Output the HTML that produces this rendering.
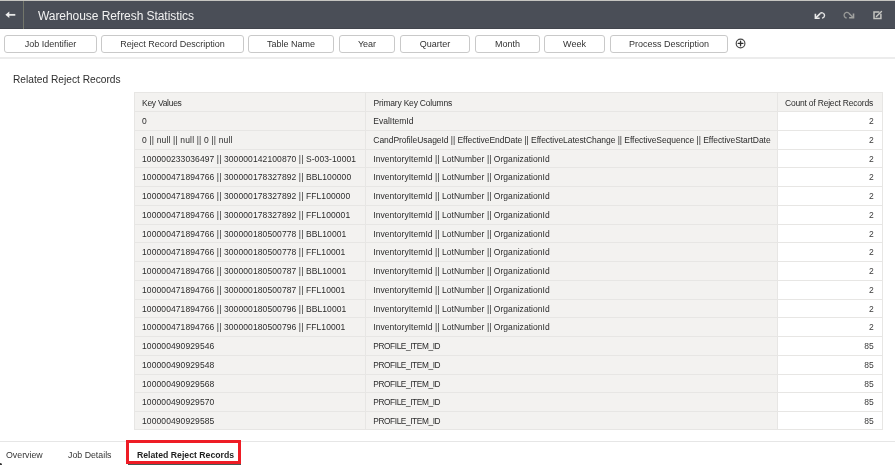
<!DOCTYPE html>
<html><head><meta charset="utf-8">
<style>
*{box-sizing:border-box;margin:0;padding:0}
html,body{width:895px;height:465px;overflow:hidden;background:#fff;font-family:"Liberation Sans",sans-serif;color:#333}
.hdr{position:absolute;left:0;top:0;width:895px;height:29px;background:#4a4e57;border-top:1px solid #c6c5c1}
.sep{position:absolute;left:23px;top:1px;width:1px;height:28px;background:#73766b}
.hbot{position:absolute;left:0;top:28px;width:895px;height:1px;background:#42454d}
.back{position:absolute;left:5px;top:9px;width:11px;height:11px}
.title{position:absolute;left:38.2px;top:8px;font-size:12px;letter-spacing:-0.06px;color:#f2f2f2;white-space:nowrap;line-height:16px}
.ico{position:absolute}
.btn{position:absolute;top:35px;height:18px;border:1px solid #c9c9c9;border-radius:3px;background:#fff;font-size:9px;color:#333;text-align:center;line-height:16px;white-space:nowrap}
.tbsep{position:absolute;left:0;top:57px;width:895px;height:2px;background:#ececec}
.h1{position:absolute;left:13px;top:73.2px;font-size:10.2px;color:#2e2e2e;line-height:14px;white-space:nowrap}
.tbl{position:absolute;left:134px;top:92px;width:749px;height:338px;border:1px solid #e7e6e4;background:#f3f2f0}
.tblb{position:absolute;left:134px;top:92px;width:749px;height:338px;border:1px solid #e7e6e4}
.th{position:absolute;left:0;top:0;width:747px;height:19px}
.th div{position:absolute;top:0;height:19px;line-height:20.5px;font-size:8.5px;letter-spacing:-0.2px;color:#333;white-space:nowrap}
.r{position:absolute;left:0;width:747px;height:18.76px;border-top:1px solid #e7e6e4}
.r div{position:absolute;top:0;height:17.76px;line-height:18px;font-size:8.5px;color:#333;white-space:nowrap}
.c1{left:0;width:230px;padding-left:7px}
.c2{left:230px;width:413px;padding-left:7.3px;border-left:1px solid #e7e6e4}
.c3{left:642px;width:105px;padding-right:8.2px;text-align:right;background:#fff;color:#3a3a3a!important;border-left:1px solid #e7e6e4}
.tabsep{position:absolute;left:0;top:441px;width:895px;height:1px;background:#e6e6e6}
.tab{position:absolute;top:448px;font-size:8.8px;color:#363636;line-height:14px;white-space:nowrap}
.redbox{position:absolute;left:126px;top:440px;width:115px;height:24px;border:3px solid #ee1c25}
.ul{position:absolute;left:128px;top:464px;width:113px;height:1px;background:#4b5753}
.k{letter-spacing:0.1px}
.p{letter-spacing:-0.05px}
body *{will-change:transform}
.tbl div{color:#2b2b2b}
</style></head><body>
<div class="hdr"></div>
<div class="hbot"></div>
<div class="sep"></div>
<svg class="ico" style="left:0;top:0" width="24" height="29" viewBox="0 0 24 29"><path d="M5.4 14.8L9.3 11.6V18Z" fill="#f0f0f0"/><rect x="8.6" y="13.95" width="6.7" height="1.8" fill="#e6e6e6"/></svg>
<div class="title">Warehouse Refresh Statistics</div>
<svg class="ico" style="left:800px;top:0" width="95" height="29" viewBox="800 0 95 29">
<path d="M815.4 13.8V18.3H819.7" stroke="#ececec" stroke-width="1.6" fill="none"/>
<path d="M815.8 17.9L820.1 13.6" stroke="#ececec" stroke-width="1.5" fill="none"/>
<path d="M820.06 13.56A2.6 2.6 0 1 1 821.99 18.00" stroke="#e4e4e4" stroke-width="1.4" fill="none"/>
<path d="M853.5 13.6V17.8H849.1" stroke="#a3a4a2" stroke-width="1.6" fill="none"/>
<path d="M853.1 17.4L848.8 13.2" stroke="#9d9e9c" stroke-width="1.4" fill="none"/>
<path d="M848.88 13.22A2.8 2.8 0 1 0 846.66 17.99" stroke="#999a98" stroke-width="1.3" fill="none"/>
<path d="M879.4 12H874V18.5H880.9V13.8" stroke="#c4c4c0" stroke-width="1.5" fill="none"/>
<path d="M876.4 16.5L881.5 11.4" stroke="#c8c8c4" stroke-width="1.4" stroke-linecap="round" fill="none"/>
</svg>

<div class="btn" style="left:4px;width:93px">Job Identifier</div>
<div class="btn" style="left:101px;width:143px">Reject Record Description</div>
<div class="btn" style="left:248px;width:86px">Table Name</div>
<div class="btn" style="left:339px;width:56px">Year</div>
<div class="btn" style="left:400px;width:70px">Quarter</div>
<div class="btn" style="left:475px;width:65px">Month</div>
<div class="btn" style="left:544px;width:61px">Week</div>
<div class="btn" style="left:610px;width:118px">Process Description</div>
<svg class="ico" style="left:730px;top:34px" width="22" height="20" viewBox="730 34 22 20"><circle cx="740.55" cy="43.45" r="4.35" stroke="#484848" stroke-width="1.15" fill="none"/><path d="M740.55 41.1V45.8M738.2 43.45H742.9" stroke="#2e2e2e" stroke-width="1.3" stroke-linecap="round"/></svg>
<div class="tbsep"></div>

<div class="h1">Related Reject Records</div>

<div class="tbl">
<div class="th"><div style="left:7px;letter-spacing:-0.28px">Key Values</div><div style="left:230px;width:413px;height:19px;padding-left:7.6px;border-left:1px solid #e7e6e4">Primary Key Columns</div><div style="left:642px;width:105px;padding-left:7px;border-left:1px solid #e7e6e4">Count of Reject Records</div></div>
<div class="r" style="top:18.00px"><div class="c1"><span style="letter-spacing:0px">0</span></div><div class="c2"><span style="letter-spacing:0px">EvalItemId</span></div><div class="c3">2</div></div>
<div class="r" style="top:36.76px"><div class="c1"><span style="letter-spacing:0.16px">0 || null || null || 0 || null</span></div><div class="c2"><span style="letter-spacing:-0.05px">CandProfileUsageId || EffectiveEndDate || EffectiveLatestChange || EffectiveSequence || EffectiveStartDate</span></div><div class="c3">2</div></div>
<div class="r" style="top:55.52px"><div class="c1"><span style="letter-spacing:0.1px">100000233036497 || 300000142100870 || S-003-10001</span></div><div class="c2"><span style="letter-spacing:0.05px">InventoryItemId || LotNumber || OrganizationId</span></div><div class="c3">2</div></div>
<div class="r" style="top:74.28px"><div class="c1"><span style="letter-spacing:0.1px">100000471894766 || 300000178327892 || BBL100000</span></div><div class="c2"><span style="letter-spacing:0.05px">InventoryItemId || LotNumber || OrganizationId</span></div><div class="c3">2</div></div>
<div class="r" style="top:93.04px"><div class="c1"><span style="letter-spacing:0.1px">100000471894766 || 300000178327892 || FFL100000</span></div><div class="c2"><span style="letter-spacing:0.05px">InventoryItemId || LotNumber || OrganizationId</span></div><div class="c3">2</div></div>
<div class="r" style="top:111.80px"><div class="c1"><span style="letter-spacing:0.1px">100000471894766 || 300000178327892 || FFL100001</span></div><div class="c2"><span style="letter-spacing:0.05px">InventoryItemId || LotNumber || OrganizationId</span></div><div class="c3">2</div></div>
<div class="r" style="top:130.56px"><div class="c1"><span style="letter-spacing:0.1px">100000471894766 || 300000180500778 || BBL10001</span></div><div class="c2"><span style="letter-spacing:0.05px">InventoryItemId || LotNumber || OrganizationId</span></div><div class="c3">2</div></div>
<div class="r" style="top:149.32px"><div class="c1"><span style="letter-spacing:0.1px">100000471894766 || 300000180500778 || FFL10001</span></div><div class="c2"><span style="letter-spacing:0.05px">InventoryItemId || LotNumber || OrganizationId</span></div><div class="c3">2</div></div>
<div class="r" style="top:168.08px"><div class="c1"><span style="letter-spacing:0.1px">100000471894766 || 300000180500787 || BBL10001</span></div><div class="c2"><span style="letter-spacing:0.05px">InventoryItemId || LotNumber || OrganizationId</span></div><div class="c3">2</div></div>
<div class="r" style="top:186.84px"><div class="c1"><span style="letter-spacing:0.1px">100000471894766 || 300000180500787 || FFL10001</span></div><div class="c2"><span style="letter-spacing:0.05px">InventoryItemId || LotNumber || OrganizationId</span></div><div class="c3">2</div></div>
<div class="r" style="top:205.60px"><div class="c1"><span style="letter-spacing:0.1px">100000471894766 || 300000180500796 || BBL10001</span></div><div class="c2"><span style="letter-spacing:0.05px">InventoryItemId || LotNumber || OrganizationId</span></div><div class="c3">2</div></div>
<div class="r" style="top:224.36px"><div class="c1"><span style="letter-spacing:0.1px">100000471894766 || 300000180500796 || FFL10001</span></div><div class="c2"><span style="letter-spacing:0.05px">InventoryItemId || LotNumber || OrganizationId</span></div><div class="c3">2</div></div>
<div class="r" style="top:243.12px"><div class="c1"><span style="letter-spacing:0.1px">100000490929546</span></div><div class="c2"><span style="letter-spacing:-0.4px;font-size:8.3px;">PROFILE_ITEM_ID</span></div><div class="c3">85</div></div>
<div class="r" style="top:261.88px"><div class="c1"><span style="letter-spacing:0.1px">100000490929548</span></div><div class="c2"><span style="letter-spacing:-0.4px;font-size:8.3px;">PROFILE_ITEM_ID</span></div><div class="c3">85</div></div>
<div class="r" style="top:280.64px"><div class="c1"><span style="letter-spacing:0.1px">100000490929568</span></div><div class="c2"><span style="letter-spacing:-0.4px;font-size:8.3px;">PROFILE_ITEM_ID</span></div><div class="c3">85</div></div>
<div class="r" style="top:299.40px"><div class="c1"><span style="letter-spacing:0.1px">100000490929570</span></div><div class="c2"><span style="letter-spacing:-0.4px;font-size:8.3px;">PROFILE_ITEM_ID</span></div><div class="c3">85</div></div>
<div class="r" style="top:318.16px"><div class="c1"><span style="letter-spacing:0.1px">100000490929585</span></div><div class="c2"><span style="letter-spacing:-0.4px;font-size:8.3px;">PROFILE_ITEM_ID</span></div><div class="c3">85</div></div>
</div>
<div class="tblb"></div>

<div class="tabsep"></div>
<div class="tab" style="left:6px">Overview</div>
<div class="tab" style="left:68px">Job Details</div>
<div class="tab" style="left:137px;top:447.9px;font-weight:bold;color:#1e1e1e;font-size:8.7px">Related Reject Records</div>
<div class="redbox"></div>
<div class="ul"></div>
<div style="position:absolute;left:-1px;top:463px;width:3px;height:3px;border-radius:50%;background:#333"></div>
</body></html>
